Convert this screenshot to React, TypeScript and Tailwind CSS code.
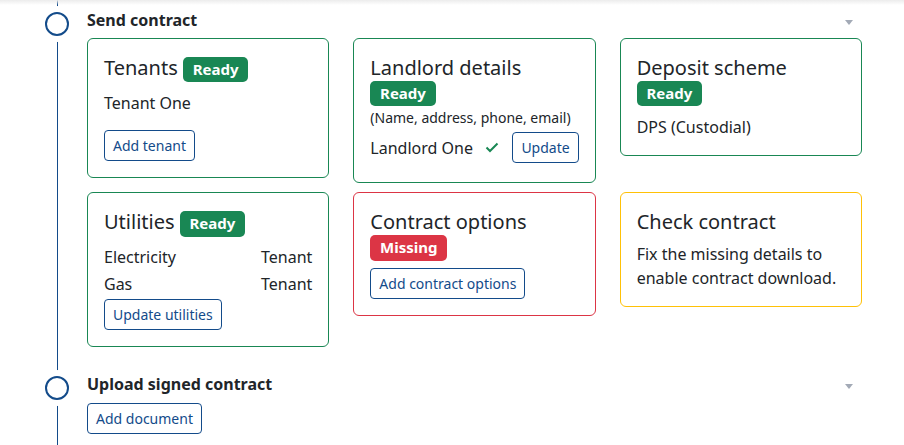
import React from "react"

function Badge({ kind = "ready" }: { kind?: "ready" | "missing" }) {
  return (
    <span
      className={
        kind === "ready"
          ? "inline-block rounded-[5px] bg-[#198754] px-[9.75px] py-[5.25px] align-baseline text-[15px] font-bold leading-none text-white"
          : "inline-block rounded-[5px] bg-[#dc3545] px-[9.75px] py-[5.25px] align-baseline text-[15px] font-bold leading-none text-white"
      }
    >
      {kind === "ready" ? "Ready" : "Missing"}
    </span>
  )
}

function OutlineButton({ children }: { children: React.ReactNode }) {
  return (
    <button className="inline-block rounded-[4px] border border-[#134b8a] bg-white px-2 py-1 text-sm leading-[21px] text-[#134b8a]">
      {children}
    </button>
  )
}

function Card({
  tone = "green",
  children,
}: {
  tone?: "green" | "red" | "yellow"
  children: React.ReactNode
}) {
  const border =
    tone === "green"
      ? "border-[#198754]"
      : tone === "red"
        ? "border-[#dc3545]"
        : "border-[#ffc107]"
  return <div className={`rounded-md border bg-white px-4 pb-4 pt-[17px] ${border}`}>{children}</div>
}

function Title({ children, className = "" }: { children: React.ReactNode; className?: string }) {
  return <h5 className={`text-[20px] font-normal leading-6 ${className}`}>{children}</h5>
}

function Caret() {
  return (
    <svg width="8" height="5" viewBox="0 0 8 5" className="mr-[9px] mt-[5px]">
      <polygon points="0,0 8,0 4,5" fill="#a3aab6" />
    </svg>
  )
}

function Step({
  title,
  className = "",
  bodyGap,
  children,
}: {
  title: string
  className?: string
  bodyGap: string
  children: React.ReactNode
}) {
  return (
    <div className={`flex ${className}`}>
      <div className="w-[87px] shrink-0">
        <div className="relative z-10 ml-[45px] mt-1 h-6 w-6 rounded-full border-2 border-[#134b8a] bg-white ring-[6px] ring-white" />
      </div>
      <div className="w-[775px]">
        <div className="flex h-6 items-center justify-between">
          <span className="text-base font-bold text-[#212529]">{title}</span>
          <Caret />
        </div>
        <div className={bodyGap}>{children}</div>
      </div>
    </div>
  )
}

export default function App() {
  return (
    <div className="relative min-h-screen overflow-hidden bg-white font-['Noto_Sans',sans-serif] text-[#212529]">
      {/* faint shadow from the bar above */}
      <div className="absolute inset-x-0 top-0 z-20 h-[5px] bg-gradient-to-b from-[#ececec] to-transparent" />
      {/* timeline */}
      <div className="absolute bottom-0 left-[57px] top-0 w-px bg-[#134b8a]" />

      <div className="pt-2">
        <Step title="Send contract" bodyGap="mt-[6px]">
          <div className="grid grid-cols-3 items-start gap-x-6 gap-y-[9px]">
            <Card>
              <Title className="mb-[9px]">
                Tenants <Badge />
              </Title>
              <p className="mb-[15px] leading-6">Tenant One</p>
              <OutlineButton>Add tenant</OutlineButton>
            </Card>

            <Card>
              <Title className="mb-[1px]">
                Landlord details <Badge />
              </Title>
              <p className="mb-[4px] text-sm leading-[21px]">(Name, address, phone, email)</p>
              <div className="mb-[3px] flex items-center">
                <span className="leading-6">Landlord One</span>
                <svg width="14" height="11" viewBox="0 0 14 11" className="ml-3" fill="none">
                  <path d="M1.5 5.5 L5 9 L12.5 1.5" stroke="#198754" strokeWidth="2" />
                </svg>
                <span className="ml-auto">
                  <OutlineButton>Update</OutlineButton>
                </span>
              </div>
            </Card>

            <Card>
              <Title className="mb-[9px]">
                Deposit scheme <Badge />
              </Title>
              <p className="leading-6">DPS (Custodial)</p>
            </Card>

            <Card>
              <Title className="mb-[8px]">
                Utilities <Badge />
              </Title>
              <div className="mb-[3px] flex justify-between leading-6">
                <span>Electricity</span>
                <span>Tenant</span>
              </div>
              <div className="mb-[3px] flex justify-between leading-6">
                <span>Gas</span>
                <span>Tenant</span>
              </div>
              <OutlineButton>Update utilities</OutlineButton>
            </Card>

            <Card tone="red">
              <Title className="mb-[7px]">
                Contract options <Badge kind="missing" />
              </Title>
              <OutlineButton>Add contract options</OutlineButton>
            </Card>

            <Card tone="yellow">
              <Title className="mb-2">Check contract</Title>
              <p className="leading-6">Fix the missing details to enable contract download.</p>
            </Card>
          </div>
        </Step>

        <Step title="Upload signed contract" className="mt-[25px]" bodyGap="mt-[7px]">
          <OutlineButton>Add document</OutlineButton>
        </Step>
      </div>
    </div>
  )
}
